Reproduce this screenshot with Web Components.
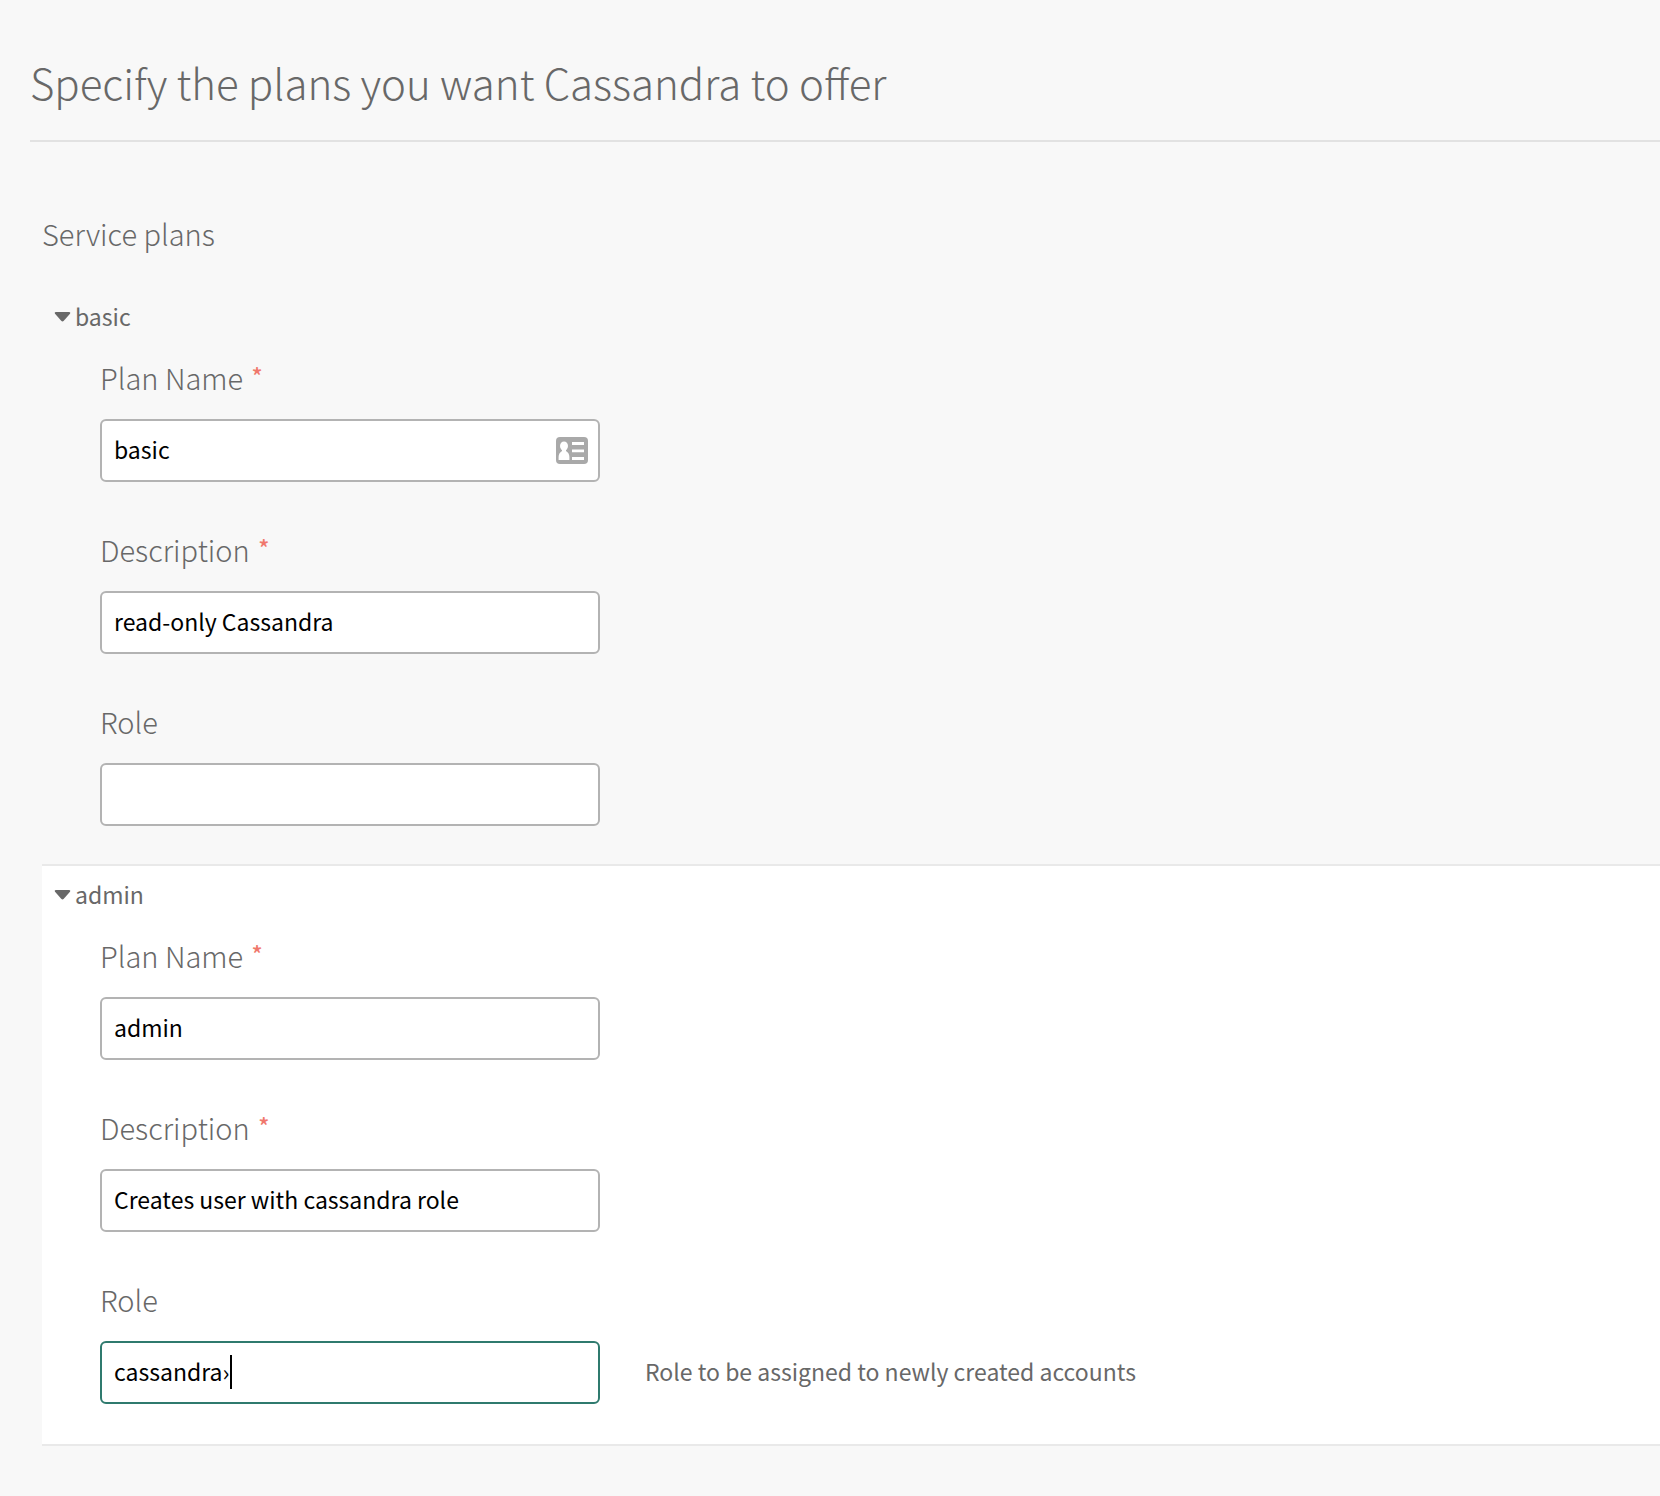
<!DOCTYPE html>
<html lang="en">
<head>
<meta charset="utf-8">
<title>Cassandra service plans</title>
<style>
  body {
    margin: 0;
    background: #f8f8f8;
    color: #686868;
    font: 400 23px/34px "Noto Sans CJK SC", "Noto Sans", sans-serif;
  }
</style>
</head>
<body>
<plans-page>
  <span slot="title">Specify the plans you want Cassandra to offer</span>
  <span slot="subtitle">Service plans</span>
  <service-plan name="basic">
    <plan-field label="Plan Name" value="basic" required contact></plan-field>
    <plan-field label="Description" value="read-only Cassandra" required></plan-field>
    <plan-field label="Role"></plan-field>
  </service-plan>
  <service-plan name="admin" active>
    <plan-field label="Plan Name" value="admin" required></plan-field>
    <plan-field label="Description" value="Creates user with cassandra role" required></plan-field>
    <plan-field label="Role" value="cassandra›" editing>Role to be assigned to newly created accounts</plan-field>
  </service-plan>
</plans-page>

<template id="page-template">
  <style>
    :host { display: block; padding: 52px 0 48px 30px; }
    header { border-bottom: 2px solid #e2e2e2; padding-bottom: 28px; }
    h1 { margin: 0; font-size: 42px; line-height: 60px; font-weight: 300; }
    main { padding: 69px 0 0 12px; }
    h2 { margin: 0 0 31px; font-size: 29px; line-height: 44px; font-weight: 300; }
  </style>
  <header><h1><slot name="title"></slot></h1></header>
  <main>
    <h2><slot name="subtitle"></slot></h2>
    <slot></slot>
  </main>
</template>

<template id="plan-template">
  <style>
    :host { display: block; border-top: 2px solid transparent; padding: 11px 0 38px 12px; }
    :host([active]) { background: #fff; border-color: #e9e9e9; border-bottom: 2px solid #e9e9e9; padding-bottom: 40px; }
    button {
      display: flex; align-items: center; gap: 4px;
      margin: 0; padding: 0; border: 0; background: none;
      font: inherit; color: inherit; cursor: pointer;
    }
    svg { display: block; width: 17px; height: 12px; }
    .fields { display: flex; flex-direction: column; gap: 45px; padding: 22px 0 0 46px; }
    .fields[hidden] { display: none; }
  </style>
  <button type="button" aria-expanded="true">
    <svg viewBox="0 -2 17 12" aria-hidden="true"><path d="M1.6 0H15.4Q17 .4 16 1.8L9.8 8.8Q8.5 10 7.2 8.8L1 1.8Q0 .4 1.6 0Z" fill="#686868"/></svg>
    <span></span>
  </button>
  <div class="fields"><slot></slot></div>
</template>

<template id="field-template">
  <style>
    :host { display: block; }
    label { display: block; margin-bottom: 20px; font-size: 29px; line-height: 44px; font-weight: 300; }
    .star { margin-left: 2px; color: #f0776c; font-size: 23px; line-height: 0; font-weight: 500; vertical-align: 5px; }
    .row { display: flex; align-items: center; gap: 45px; }
    .box { position: relative; flex: 0 1 500px; }
    input {
      display: block; box-sizing: border-box; width: 100%; height: 63px; margin: 0;
      padding: 0 12px 4px; border: 2px solid #b3b3b3; border-radius: 6px; outline: 0;
      background: #fff; color: #000; font: inherit; caret-color: transparent;
    }
    :host([editing]) input { border-color: #2f7a6e; }
    .caret { position: absolute; left: 130px; top: 14px; width: 2px; height: 34px; background: #000; }
    .card { position: absolute; right: 12px; top: 18px; width: 32px; height: 27px; }
    .hint { padding-bottom: 4px; }
  </style>
  <label for="control"></label>
  <div class="row"><div class="box"><input id="control" type="text"></div></div>
</template>

<script>
  const stamp = (host, id) => {
    const root = host.attachShadow({ mode: 'open' });
    root.append(document.getElementById(id).content.cloneNode(true));
    return root;
  };

  customElements.define('plans-page', class extends HTMLElement {
    constructor() { super(); stamp(this, 'page-template'); }
  });

  customElements.define('service-plan', class extends HTMLElement {
    connectedCallback() {
      if (this.shadowRoot) return;
      const root = stamp(this, 'plan-template');
      const button = root.querySelector('button');
      button.querySelector('span').textContent = this.getAttribute('name');
      button.addEventListener('click', () => {
        const fields = root.querySelector('.fields');
        fields.hidden = !fields.hidden;
        button.setAttribute('aria-expanded', String(!fields.hidden));
      });
    }
  });

  customElements.define('plan-field', class extends HTMLElement {
    connectedCallback() {
      if (this.shadowRoot) return;
      const root = stamp(this, 'field-template');
      const label = root.querySelector('label');
      const input = root.querySelector('input');
      const box = root.querySelector('.box');
      label.textContent = this.getAttribute('label');
      input.value = this.getAttribute('value') || '';
      if (this.hasAttribute('required')) {
        input.required = true;
        label.insertAdjacentHTML('beforeend', ' <span class="star">*</span>');
      }
      if (this.hasAttribute('contact')) {
        box.insertAdjacentHTML('beforeend', `
          <svg class="card" viewBox="0 0 32 27" aria-hidden="true">
            <rect width="32" height="27" rx="4" fill="#a9a9a9"/>
            <g fill="#fff">
              <ellipse cx="8" cy="9" rx="4" ry="4.5"/>
              <path d="M6 12H10V14Q13.400 16 13.400 20V23H2.600V20Q2.600 16 6 14Z"/>
              <path d="M16 5H28V8H16ZM16 12.500H28V15.200H16ZM16 20H28V23H16Z"/>
            </g>
          </svg>`);
      }
      if (this.hasAttribute('editing')) {
        box.insertAdjacentHTML('beforeend', '<span class="caret"></span>');
      }
      if (this.textContent.trim()) {
        root.querySelector('.row').insertAdjacentHTML('beforeend', '<span class="hint"><slot></slot></span>');
      }
    }
  });
</script>
</body>
</html>
